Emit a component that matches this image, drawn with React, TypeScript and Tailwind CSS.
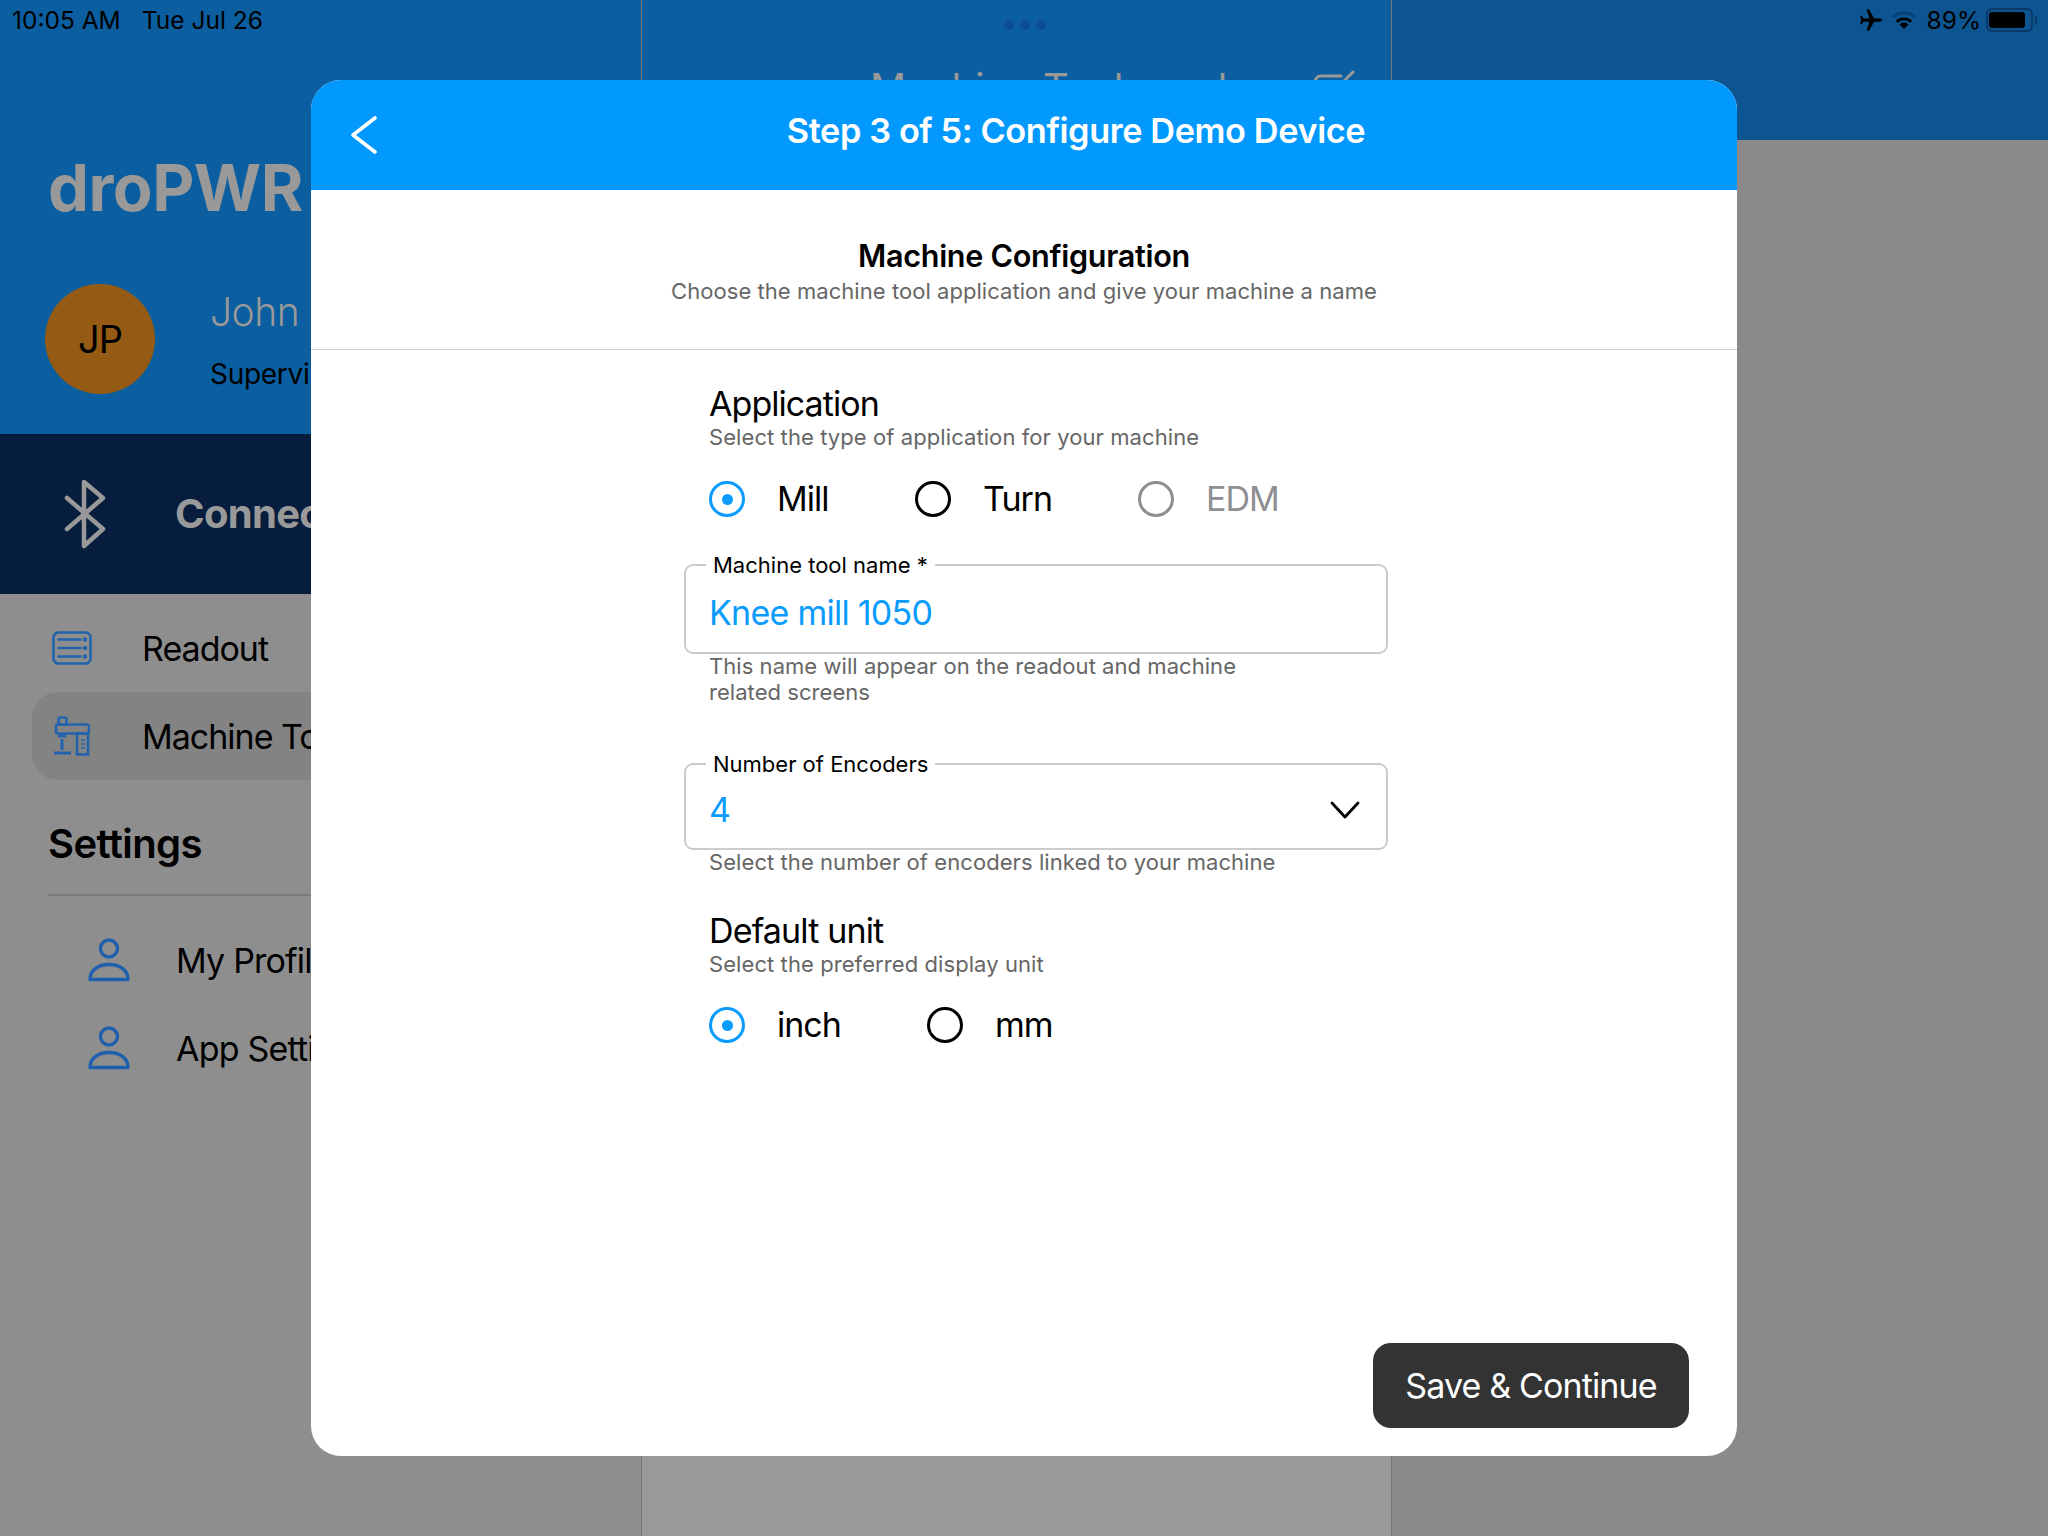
import React from "react";
import { MdAirplanemodeActive } from "react-icons/md";

const FONT = "font-['Inter','Liberation_Sans',sans-serif]";

function Radio({ checked, disabled }: { checked?: boolean; disabled?: boolean }) {
  const color = checked ? "border-[#0a9bff]" : disabled ? "border-[#8e8e93]" : "border-black";
  return (
    <span className={`flex h-9 w-9 shrink-0 items-center justify-center rounded-full border-[3px] ${color}`}>
      {checked && <span className="h-[11px] w-[11px] rounded-full bg-[#0a9bff]" />}
    </span>
  );
}

function RadioRow({ items }: { items: { label: string; checked?: boolean; disabled?: boolean; w: number }[] }) {
  return (
    <div className="flex h-10 items-center">
      {items.map((it) => (
        <div key={it.label} className="flex items-center" style={{ width: it.w }}>
          <Radio checked={it.checked} disabled={it.disabled} />
          <span className={`ml-8 text-[34px] leading-10 tracking-[-1px] ${it.disabled ? "text-[#8e8e93]" : "text-black"}`}>{it.label}</span>
        </div>
      ))}
    </div>
  );
}

function Field({ label, children, h }: { label: string; children: React.ReactNode; h: string }) {
  return (
    <div className={`relative flex items-center rounded-[9px] border-2 border-[#cccccc] pl-[23px] pr-[26px] ${h}`}>
      <span className="absolute left-[20px] top-[-13px] bg-white px-[7px] text-[22px] leading-6 text-black">{label}</span>
      {children}
    </div>
  );
}

function UserIcon() {
  return (
    <svg width="42" height="44" viewBox="0 0 42 44" fill="none" stroke="#1f5fae" strokeWidth="3.4" strokeLinejoin="round">
      <circle cx="21" cy="10.5" r="8.5" />
      <path d="M2 41.5c0-9 8-15 19-15s19 6 19 15z" />
    </svg>
  );
}

function ReadoutIcon() {
  return (
    <svg width="40" height="34" viewBox="0 0 40 34" fill="none" stroke="#2263ad" strokeWidth="2.6" strokeLinecap="round">
      <rect x="1.5" y="1.5" width="37" height="31" rx="5" />
      <path d="M6.5 8.5h22M6.5 17h22M6.5 25.5h22" />
      <circle cx="33" cy="8.5" r="1" />
      <circle cx="33" cy="17" r="1" />
      <circle cx="33" cy="25.5" r="1" />
    </svg>
  );
}

function MachineIcon() {
  return (
    <svg width="36" height="40" viewBox="0 0 36 40" fill="none" stroke="#2263ad" strokeWidth="2.6">
      <rect x="4.5" y="1.5" width="8" height="7" rx="1.5" />
      <rect x="2" y="8.5" width="33" height="9" rx="2" />
      <rect x="23" y="17.5" width="11" height="21" />
      <path d="M4 20h8" strokeWidth="3" />
      <path d="M8 23v11" strokeWidth="3" />
      <path d="M0 37h17" strokeWidth="3" />
      <path d="M27 24h4M27 28h4M27 32h4" strokeWidth="1.6" />
    </svg>
  );
}

function Wifi() {
  return (
    <svg className="ml-[-1px] mt-[2px]" width="26" height="19" viewBox="0 0 28 21" fill="none" strokeWidth="3">
      <path d="M1.5 8C8.5 1.5 19.5 1.5 26.500 8" stroke="#0b3f73" />
      <path d="M6 13c4.500-4.200 11.500-4.200 16 0" stroke="#000" />
      <path d="M10 17c2.300-1.800 5.700-1.800 8 0" stroke="#000" />
      <path d="M14 21l-3-3c1.800-1 4.200-1 6 0z" fill="#000" stroke="none" />
    </svg>
  );
}

function Battery() {
  return (
    <div className="ml-[-3px] flex items-center">
      <div className="flex h-[24px] w-[47px] items-center rounded-[6px] border-2 border-[#0a3a6a] px-[1px] py-[2px]">
        <div className="h-full w-[36px] rounded-[3px] bg-black" />
      </div>
      <div className="ml-[2px] h-[9px] w-[2px] rounded-r-full bg-[#0a3a6a]" />
    </div>
  );
}

function NavRow({ icon, label, active }: { icon: React.ReactNode; label: string; active?: boolean }) {
  return (
    <div className={`ml-8 flex h-[88px] items-center rounded-l-[26px] ${active ? "bg-[#838383]" : ""}`}>
      <div className="ml-[10px] flex w-[60px] justify-center">{icon}</div>
      <span className="ml-[40px] whitespace-nowrap text-[34px] tracking-[-1px] text-black">{label}</span>
    </div>
  );
}

function SubRow({ label }: { label: string }) {
  return (
    <div className="flex h-[88px] items-center pl-[88px]">
      <UserIcon />
      <span className="ml-[46px] whitespace-nowrap text-[34px] tracking-[-0.8px] text-black">{label}</span>
    </div>
  );
}

export default function App() {
  return (
    <div className={`relative flex h-[1536px] w-[2048px] overflow-hidden bg-[#8a8a8a] ${FONT}`}>
      {/* sidebar */}
      <div className="flex h-full w-[641px] shrink-0 flex-col bg-[#8e8e8e]">
        <div className="flex h-[434px] flex-col bg-[#0b5e9f]">
          <div className="flex h-10 items-center gap-[21px] pl-3 text-[24.500px] leading-10 text-black">
            <span>10:05 AM</span>
            <span>Tue Jul 26</span>
          </div>
          <div className="pl-[48px] pt-[106px] text-[65px] font-bold leading-[84px] tracking-[-0.5px] text-[#999999]">droPWR</div>
          <div className="mt-[54px] flex items-center pl-[45px]">
            <div className="flex h-[110px] w-[110px] items-center justify-center rounded-full bg-[#955a14] text-[38px] tracking-[-1px] text-black">JP</div>
            <div className="ml-[55px] mt-[2px] flex flex-col">
              <span className="text-[39px] font-light leading-[48px] tracking-[-0.5px] text-[#999999]">John Peterson</span>
              <span className="mt-[20px] text-[28px] leading-9 tracking-[-0.3px] text-black">Supervisor</span>
            </div>
          </div>
        </div>
        <div className="flex h-[160px] items-center bg-[#071d3d] pl-[62px]">
          <svg width="44" height="70" viewBox="0 0 44 70" fill="none" stroke="#999999" strokeWidth="4.5" strokeLinecap="round" strokeLinejoin="round">
            <path d="M5 19l36 31-19 17V3l19 16L5 50" />
          </svg>
          <span className="ml-[69px] text-[40px] font-bold tracking-[-0.7px] text-[#999999]">Connected</span>
        </div>
        <div className="pt-[10px]">
          <NavRow icon={<ReadoutIcon />} label="Readout" />
          <NavRow icon={<MachineIcon />} label="Machine Tools" active />
        </div>
        <div className="ml-[48px] mt-[39px] border-b-2 border-[#7a7a7a] pb-[25px] text-[40px] font-semibold leading-[50px] tracking-[-0.6px] text-black">Settings</div>
        <div className="pt-[20px]">
          <SubRow label="My Profile" />
          <SubRow label="App Settings" />
        </div>
      </div>

      {/* center column */}
      <div className="flex h-full w-[751px] shrink-0 flex-col border-x border-[#777777] bg-[#999999]">
        <div className="relative flex h-[140px] flex-col items-center bg-[#0b5e9f]">
          <div className="ml-[16px] mt-[20px] flex gap-[6px]">
            <span className="h-[10px] w-[10px] rounded-full bg-[#0a4d93]" />
            <span className="h-[10px] w-[10px] rounded-full bg-[#0a4d93]" />
            <span className="h-[10px] w-[10px] rounded-full bg-[#0a4d93]" />
          </div>
          <div className="mt-[34px] self-start pl-[228px] text-[40px] leading-[48px] text-[#999999]">Machine Tool used</div>
          <svg className="absolute left-[671px] top-[70px]" width="42" height="30" viewBox="0 0 42 30" fill="none" stroke="#999999" strokeWidth="3" strokeLinecap="round">
            <path d="M2 30V12a6 6 0 0 1 6-6h20" />
            <path d="M30 12L40 2" />
          </svg>
        </div>
      </div>

      {/* right column */}
      <div className="flex h-full flex-1 flex-col">
        <div className="flex h-[140px] items-start justify-end gap-[8px] bg-[#0d5590] pr-[11px] pt-[8px] text-black">
          <MdAirplanemodeActive className="mt-[-1px] rotate-90 text-[26px]" />
          <Wifi />
          <span className="ml-[2px] text-[24.500px] leading-6">89%</span>
          <Battery />
        </div>
      </div>

      {/* modal */}
      <div className="absolute left-[311px] top-[80px] flex h-[1376px] w-[1426px] flex-col overflow-hidden rounded-[30px] bg-white">
        <div className="relative flex h-[110px] shrink-0 items-start justify-center bg-[#0299ff] pt-[31px]">
          <svg className="absolute left-[39px] top-[36px]" width="28" height="38" viewBox="0 0 28 38" fill="none" stroke="#ffffff" strokeWidth="3.6" strokeLinecap="round" strokeLinejoin="round">
            <path d="M25 2L3 19l22 17" />
          </svg>
          <span className="ml-[104px] text-[34.300px] font-semibold leading-10 tracking-[-0.4px] text-white">Step 3 of 5: Configure Demo Device</span>
        </div>
        <div className="flex shrink-0 flex-col items-center border-b border-[#cccccc] pb-[43px] pt-[46px]">
          <span className="text-[30.600px] font-semibold leading-10 tracking-[-0.3px] text-black">Machine Configuration</span>
          <span className="text-[22px] leading-[30px] tracking-[0.05px] text-[#666666]">Choose the machine tool application and give your machine a name</span>
        </div>
        <div className="ml-[373px] flex w-[704px] flex-1 flex-col">
          <div className="pl-[25px] pt-[34px]">
            <div className="text-[34px] leading-10 tracking-[-0.95px] text-black">Application</div>
            <div className="mt-[-1px] text-[22px] leading-7 tracking-[0.08px] text-[#666666]">Select the type of application for your machine</div>
            <div className="mt-[28px]">
              <RadioRow
                items={[
                  { label: "Mill", checked: true, w: 206 },
                  { label: "Turn", w: 223 },
                  { label: "EDM", disabled: true, w: 200 },
                ]}
              />
            </div>
          </div>
          <div className="mt-[45px]">
            <Field label="Machine tool name *" h="h-[90px]">
              <span className="mt-[7px] text-[34px] leading-10 tracking-[-0.75px] text-[#0a9bff]">Knee mill 1050</span>
            </Field>
          </div>
          <div className="mt-[-1px] pl-[25px] text-[22px] leading-[26px] tracking-[0.05px] text-[#666666]">
            This name will appear on the readout and machine
            <br />
            related screens
          </div>
          <div className="mt-[58px]">
            <Field label="Number of Encoders" h="h-[87px] justify-between">
              <span className="mt-[6px] text-[34px] leading-10 text-[#0a9bff]">4</span>
              <svg className="mt-[6px]" width="30" height="18" viewBox="0 0 30 18" fill="none" stroke="#000000" strokeWidth="2.800" strokeLinecap="round" strokeLinejoin="round">
                <path d="M2 2l13 14L28 2" />
              </svg>
            </Field>
          </div>
          <div className="mt-[-1px] pl-[25px] text-[22px] leading-[26px] tracking-[0.07px] text-[#666666]">Select the number of encoders linked to your machine</div>
          <div className="pl-[25px] pt-[36px]">
            <div className="text-[34px] leading-10 tracking-[-0.85px] text-black">Default unit</div>
            <div className="mt-[-1px] text-[22px] leading-7 tracking-[0.08px] text-[#666666]">Select the preferred display unit</div>
            <div className="mt-[27px]">
              <RadioRow
                items={[
                  { label: "inch", checked: true, w: 218 },
                  { label: "mm", w: 200 },
                ]}
              />
            </div>
          </div>
        </div>
        <div className="flex shrink-0 justify-end pb-7 pr-12">
          <button className="flex h-[85px] w-[316px] items-center justify-center rounded-[18px] bg-[#333333] text-[34px] tracking-[-0.85px] text-white">
            Save &amp; Continue
          </button>
        </div>
      </div>
    </div>
  );
}
